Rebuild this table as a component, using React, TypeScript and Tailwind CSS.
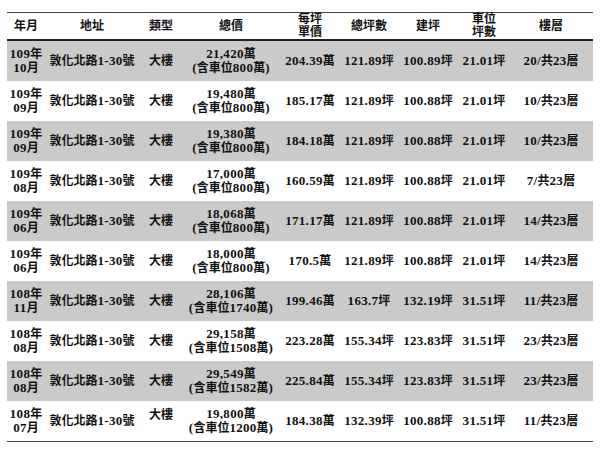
import React from "react";

type Row = {
  ym: [string, string];
  total: [string, string];
  unit: string;
  area: string;
  build: string;
  park: string;
  floor: string;
};

const rows: Row[] = [
  { ym: ["109年", "10月"], total: ["21,420萬", "(含車位800萬)"], unit: "204.39萬", area: "121.89坪", build: "100.89坪", park: "21.01坪", floor: "20/共23層" },
  { ym: ["109年", "09月"], total: ["19,480萬", "(含車位800萬)"], unit: "185.17萬", area: "121.89坪", build: "100.88坪", park: "21.01坪", floor: "10/共23層" },
  { ym: ["109年", "09月"], total: ["19,380萬", "(含車位800萬)"], unit: "184.18萬", area: "121.89坪", build: "100.88坪", park: "21.01坪", floor: "10/共23層" },
  { ym: ["109年", "08月"], total: ["17,000萬", "(含車位800萬)"], unit: "160.59萬", area: "121.89坪", build: "100.88坪", park: "21.01坪", floor: "7/共23層" },
  { ym: ["109年", "06月"], total: ["18,068萬", "(含車位800萬)"], unit: "171.17萬", area: "121.89坪", build: "100.88坪", park: "21.01坪", floor: "14/共23層" },
  { ym: ["109年", "06月"], total: ["18,000萬", "(含車位800萬)"], unit: "170.5萬", area: "121.89坪", build: "100.88坪", park: "21.01坪", floor: "14/共23層" },
  { ym: ["108年", "11月"], total: ["28,106萬", "(含車位1740萬)"], unit: "199.46萬", area: "163.7坪", build: "132.19坪", park: "31.51坪", floor: "11/共23層" },
  { ym: ["108年", "08月"], total: ["29,158萬", "(含車位1508萬)"], unit: "223.28萬", area: "155.34坪", build: "123.83坪", park: "31.51坪", floor: "23/共23層" },
  { ym: ["108年", "08月"], total: ["29,549萬", "(含車位1582萬)"], unit: "225.84萬", area: "155.34坪", build: "123.83坪", park: "31.51坪", floor: "23/共23層" },
  { ym: ["108年", "07月"], total: ["19,800萬", "(含車位1200萬)"], unit: "184.38萬", area: "132.39坪", build: "100.88坪", park: "31.51坪", floor: "11/共23層" },
];

const grid = "grid grid-cols-[38px_94px_44px_96px_62px_56px_62px_50px_84px]";

function T({ s }: { s: string }) {
  const parts = s.split(/([\x00-\x7F]+)/).filter((p) => p.length > 0);
  return (
    <span className="block leading-[13px]">
      {parts.map((p, i) =>
        /^[\x00-\x7F]+$/.test(p) ? (
          <span key={i} className="text-[13px] tracking-[0.3px]">
            {p}
          </span>
        ) : (
          <span key={i}>{p}</span>
        )
      )}
    </span>
  );
}

function Cell({ lines, className = "" }: { lines: string[]; className?: string }) {
  return (
    <div className={`flex flex-col items-center justify-center text-center whitespace-nowrap ${className}`}>
      {lines.map((l, i) => (
        <T key={i} s={l} />
      ))}
    </div>
  );
}

export default function App() {
  return (
    <div
      className="w-[600px] h-[450px] bg-white pt-[12px] px-[7px] text-[12px] leading-[13px] font-bold text-[#111]"
      style={{ fontFamily: '"Liberation Serif", "Noto Sans CJK TC", serif' }}
    >
      <div className="border-t border-[#444] border-b border-b-[#444]">
        <div className={`${grid} h-[28px] border-b-2 border-[#222]`}>
          <Cell lines={["年月"]} />
          <Cell lines={["地址"]} />
          <Cell lines={["類型"]} />
          <Cell lines={["總價"]} />
          <Cell lines={["每坪", "單價"]} />
          <Cell lines={["總坪數"]} />
          <Cell lines={["建坪"]} />
          <Cell lines={["車位", "坪數"]} />
          <Cell lines={["樓層"]} />
        </div>
        {rows.map((r, i) => (
          <div key={i} className={`${grid} h-[40px] ${i % 2 === 0 ? "bg-[#cacaca]" : "bg-white"}`}>
            <Cell lines={r.ym} />
            <Cell lines={["敦化北路1-30號"]} />
            <Cell lines={["大樓"]} className={i === rows.length - 1 ? "justify-start pt-[8px]" : ""} />
            <Cell lines={r.total} />
            <Cell lines={[r.unit]} />
            <Cell lines={[r.area]} />
            <Cell lines={[r.build]} />
            <Cell lines={[r.park]} />
            <Cell lines={[r.floor]} />
          </div>
        ))}
      </div>
    </div>
  );
}
